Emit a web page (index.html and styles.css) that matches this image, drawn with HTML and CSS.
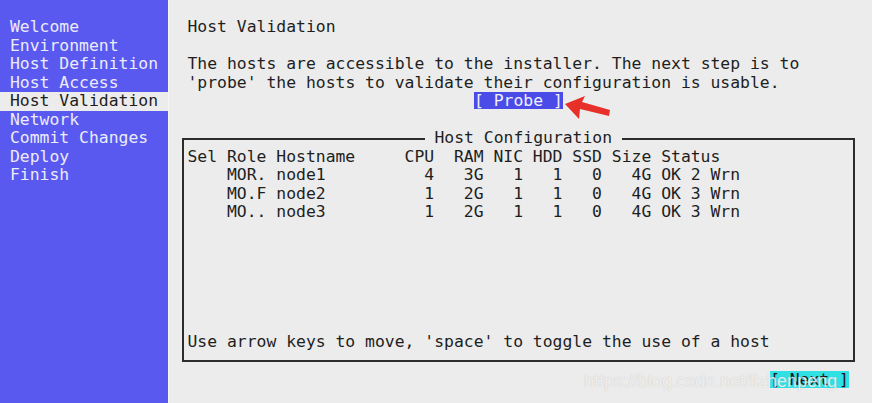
FILE: index.html
```html
<!DOCTYPE html>
<html>
<head>
<meta charset="utf-8">
<link rel="stylesheet" href="styles.css">
</head>
<body>
<div class="screen">
  <nav class="steps">
    <div class="step">Welcome</div>
    <div class="step">Environment</div>
    <div class="step">Host Definition</div>
    <div class="step">Host Access</div>
    <div class="step active">Host Validation</div>
    <div class="step">Network</div>
    <div class="step">Commit Changes</div>
    <div class="step">Deploy</div>
    <div class="step">Finish</div>
  </nav>
  <main class="pane">
    <div class="line indent">Host Validation</div>
    <div class="line"></div>
    <div class="line indent">The hosts are accessible to the installer. The next step is to</div>
    <div class="line indent">'probe' the hosts to validate their configuration is usable.</div>
    <div class="line probe-row"><span class="btn probe">[ Probe ]</span></div>
    <div class="line"></div>
    <fieldset class="hosts">
      <legend class="hosts-title"> Host Configuration </legend>
      <div class="hosts-body">
        <div class="line">Sel Role Hostname     CPU  RAM NIC HDD SSD Size Status</div>
        <div class="line">    MOR. node1          4   3G   1   1   0   4G OK 2 Wrn</div>
        <div class="line">    MO.F node2          1   2G   1   1   0   4G OK 3 Wrn</div>
        <div class="line">    MO.. node3          1   2G   1   1   0   4G OK 3 Wrn</div>
        <div class="line hint">Use arrow keys to move, 'space' to toggle the use of a host</div>
      </div>
    </fieldset>
    <div class="line next-row"><span class="btn next">[ Next ]</span></div>
  </main>
  <svg class="arrow" width="56" height="30" viewBox="0 0 56 30">
    <polygon points="5,12 25,4 22,10 50,18 49,24 20,17 19,27" fill="#e8302a"/>
  </svg>
  <div class="watermark">https://blog.csdn.net/lizhenpeng</div>
</div>
</body>
</html>
```
FILE: styles.css
```css
html, body {
  margin: 0;
  padding: 0;
}
body {
  background: #ececec;
  font-family: "DejaVu Sans Mono", "Liberation Mono", monospace;
  font-size: 16.4px;
  line-height: 18.5px;
  color: #1e1e1e;
}
.screen {
  position: relative;
  display: flex;
  width: 872px;
  height: 403px;
  overflow: hidden;
}
.steps {
  width: 168px;
  flex: none;
  background: #5959f0;
  padding-top: 18.25px;
  box-shadow: 1px 0 0 #f6f6f6;
}
.step {
  height: 18.5px;
  padding-left: 10px;
  color: #ececf8;
  white-space: pre;
}
.step.active {
  background: #ececec;
  color: #1e1e1e;
}
.pane {
  flex: 1;
  padding-top: 18.25px;
  display: flex;
  flex-direction: column;
}
.line {
  height: 18.5px;
  white-space: pre;
}
.indent {
  padding-left: 19.5px;
}
.probe-row {
  padding-left: 306px;
}
.btn {
  display: inline-block;
  height: 17px;
  line-height: 17px;
}
.probe {
  background: #4b4be8;
  color: #f0f0ff;
}
.hosts {
  margin: 0 0 8.25px 13.6px;
  padding: 0;
  width: 673px;
  box-sizing: border-box;
  min-inline-size: 0;
  border: 2px solid #2c2c2c;
}
.hosts-title {
  padding: 0;
  margin-left: 241px;
  white-space: pre;
  height: 18.5px;
  line-height: 18.5px;
}
.hosts-body {
  height: 203.5px;
  padding: 0 0 8.25px 3.9px;
  display: flex;
  flex-direction: column;
}
.hint {
  margin-top: auto;
}
.next-row {
  padding-left: 602px;
  padding-top: 1px;
}
.next {
  background: #2fe0e4;
  color: #1a1a1a;
}
.arrow {
  position: absolute;
  left: 560px;
  top: 92px;
}
.watermark {
  position: absolute;
  left: 584px;
  top: 370px;
  font-family: "Liberation Sans", Arial, sans-serif;
  font-size: 18px;
  line-height: 22px;
  color: rgba(255, 255, 255, 0.75);
  text-shadow: 0 0 1px rgba(150, 150, 150, 0.6);
  white-space: nowrap;
  pointer-events: none;
}
```
